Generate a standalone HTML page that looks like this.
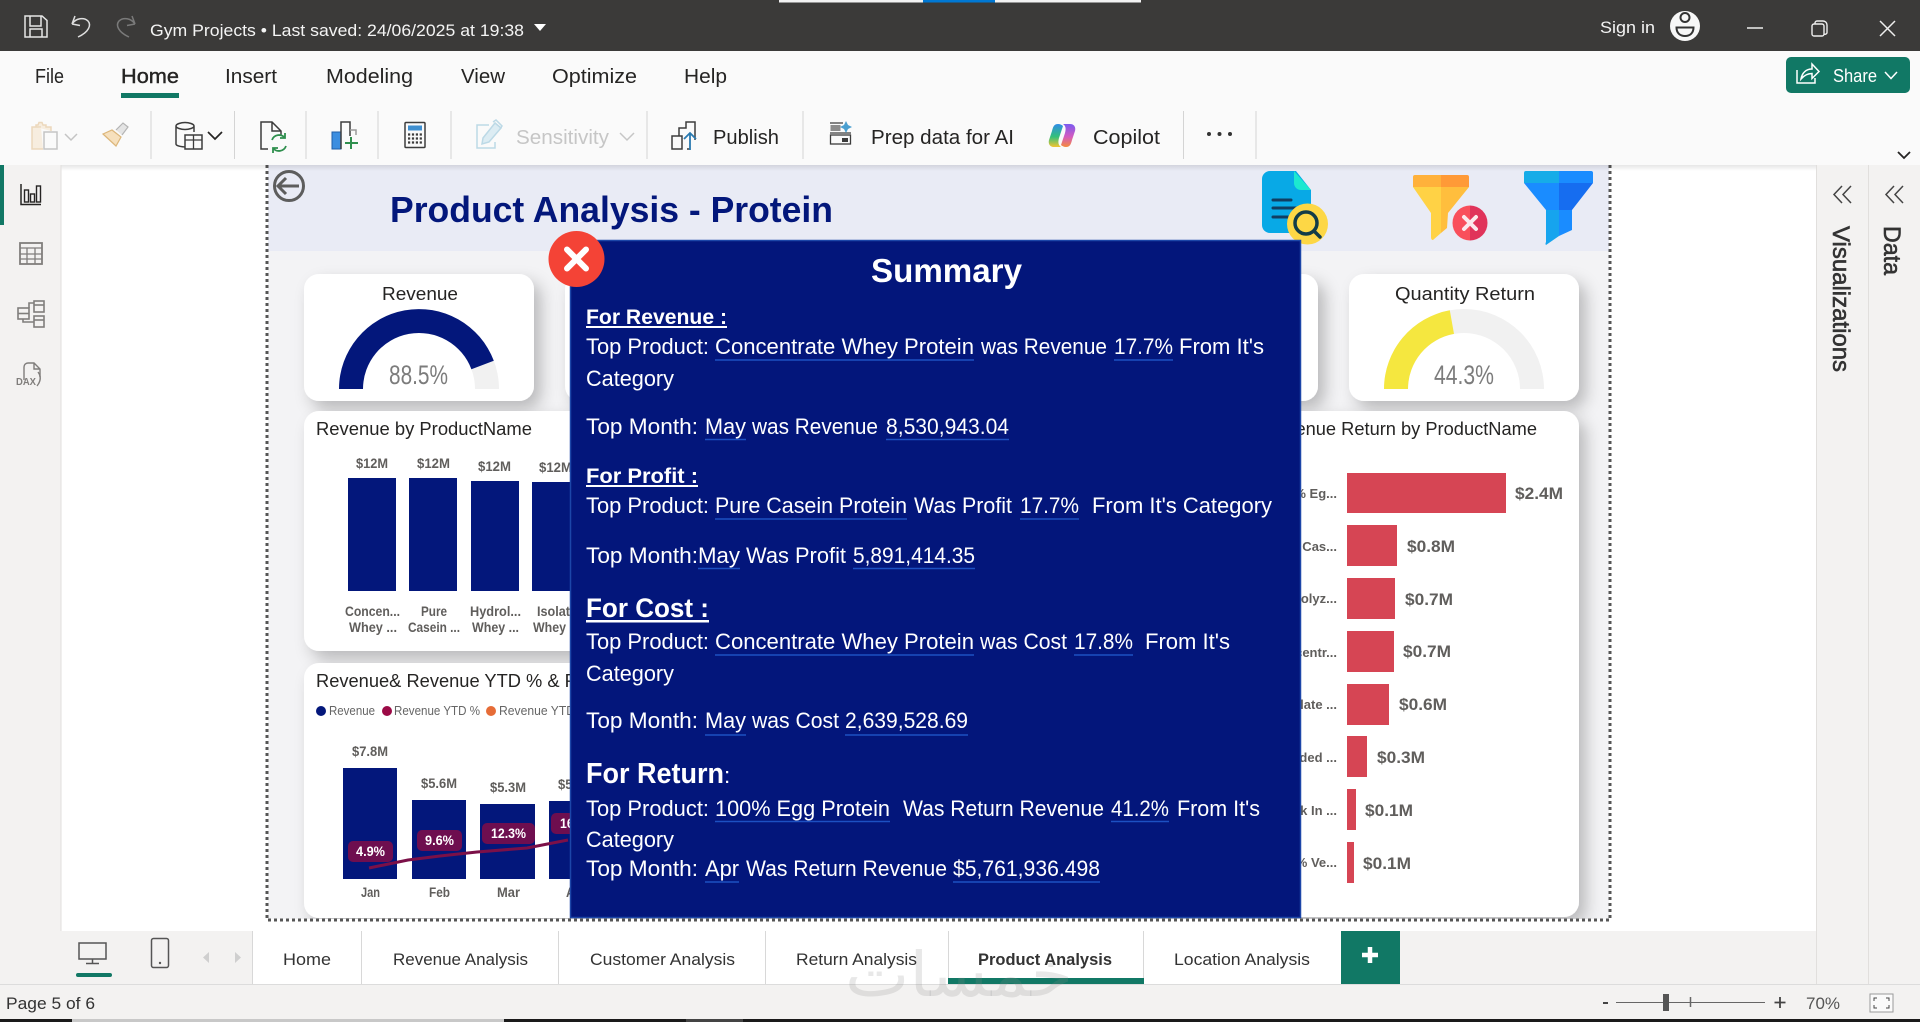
<!DOCTYPE html>
<html lang="en">
<head>
<meta charset="utf-8">
<title>Gym Projects - Product Analysis</title>
<style>
html,body{margin:0;padding:0;background:#fff;width:1920px;height:1022px;overflow:hidden}
svg{display:block}
text{font-family:"Liberation Sans",sans-serif;white-space:pre}
.tb{fill:#f4f4f4;font-size:17px}
.rb{fill:#252423;font-size:20px}
.tl{fill:#252423;font-size:20px}
.ct{fill:#252423;font-size:18px}
.dl{fill:#605e5c;font-size:14px;font-weight:700}
.rl{fill:#605e5c;font-size:17px;font-weight:700}
.m{fill:#fff;font-size:22.500px}
.mb{fill:#fff;font-weight:700}
.tab{fill:#333;font-size:17px}
.gv{fill:#7c7c7c;font-size:27px}
.lg{fill:#666;font-size:13px}
.wl{fill:#fff;font-size:14px;font-weight:700}
</style>
</head>
<body>
<svg width="1920" height="1022" viewBox="0 0 1920 1022" xmlns="http://www.w3.org/2000/svg">
<defs>
<filter id="sh" x="-20%" y="-20%" width="140%" height="140%"><feDropShadow dx="7" dy="8" stdDeviation="8" flood-color="#000" flood-opacity=".24"/></filter>
<clipPath id="pg"><rect x="268" y="165" width="1341" height="754"/></clipPath>
<linearGradient id="cpA" x1="0" y1="0" x2="0" y2="1"><stop offset="0" stop-color="#2f8ce8"/><stop offset=".55" stop-color="#34c07a"/><stop offset="1" stop-color="#f4c430"/></linearGradient>
<linearGradient id="cpB" x1="0" y1="0" x2="0" y2="1"><stop offset="0" stop-color="#7a5af0"/><stop offset=".55" stop-color="#d45bc0"/><stop offset="1" stop-color="#f58a3c"/></linearGradient>
<linearGradient id="rs" x1="0" y1="0" x2="0" y2="1"><stop offset="0" stop-color="#000" stop-opacity=".1"/><stop offset="1" stop-color="#000" stop-opacity="0"/></linearGradient>
</defs>

<!-- base -->
<rect width="1920" height="1022" fill="#f3f2f1"/>
<rect x="61" y="165" width="1755" height="766" fill="#fff"/>

<!-- report page -->
<g clip-path="url(#pg)">
<rect x="268" y="165" width="1341" height="754" fill="#f3f3f5"/>
<rect x="268" y="165" width="1341" height="86" fill="#e9ebf5"/>
<rect x="304" y="274" width="230" height="127" rx="15" fill="#fff" filter="url(#sh)"/>
<rect x="565" y="274" width="230" height="127" rx="15" fill="#fff" filter="url(#sh)"/>
<rect x="1088" y="274" width="230" height="127" rx="15" fill="#fff" filter="url(#sh)"/>
<rect x="1349" y="274" width="230" height="127" rx="15" fill="#fff" filter="url(#sh)"/>
<rect x="304" y="411" width="500" height="240" rx="15" fill="#fff" filter="url(#sh)"/>
<rect x="304" y="663" width="500" height="255" rx="15" fill="#fff" filter="url(#sh)"/>
<rect x="1080" y="411" width="499" height="506" rx="15" fill="#fff" filter="url(#sh)"/>
</g>

<!-- back arrow -->
<circle cx="289" cy="186" r="14.500" fill="none" stroke="#5d5d5d" stroke-width="3"/>
<path d="M299 186H279M286 178l-8 8 8 8" fill="none" stroke="#5d5d5d" stroke-width="3"/>

<!-- title -->
<text x="390" y="222" textLength="443" lengthAdjust="spacingAndGlyphs" style="font-size:36px;font-weight:700;fill:#03177b">Product Analysis - Protein</text>

<!-- doc icon -->
<path d="M1270 171h26l15 19v36a7 7 0 0 1-7 7h-34a8 8 0 0 1-8-8v-46a8 8 0 0 1 8-8z" fill="#08a9e6"/>
<path d="M1294 171l17 19h-10a7 7 0 0 1-7-7z" fill="#1ce8d0"/>
<path d="M1273 200h18M1273 208h26M1273 217h20" stroke="#103e62" stroke-width="3" stroke-linecap="round"/>
<circle cx="1307.500" cy="224" r="20.500" fill="#fdd745"/>
<circle cx="1306" cy="223" r="11" fill="none" stroke="#123c48" stroke-width="3.500"/>
<path d="M1314 231l6 6" stroke="#123c48" stroke-width="3.500" stroke-linecap="round"/>

<!-- orange funnel -->
<path d="M1413 177a2 2 0 0 1 2-2h26v12h-28z" fill="#ffb13b"/>
<path d="M1441 175h26a2 2 0 0 1 2 2v10h-28z" fill="#ff9a37"/>
<path d="M1413 187h28v46l-8 7q-2 0-2-3v-24z" fill="#ffd245"/>
<path d="M1441 187h28l-21 26-1 15-6 5z" fill="#ffbe3d"/>
<path d="M1470 205.500a17.500 17.500 0 0 0 0 35z" fill="#f94f5b"/>
<path d="M1470 205.500a17.500 17.500 0 0 1 0 35z" fill="#e0335a"/>
<path d="M1464 217l12 12M1476 217l-12 12" stroke="#fbe9ec" stroke-width="4" stroke-linecap="round"/>

<!-- blue funnel -->
<path d="M1524 173a2 2 0 0 1 2-2h33v12h-35z" fill="#16ace8"/>
<path d="M1559 171h32a2 2 0 0 1 2 2v10h-34z" fill="#1a8cff"/>
<path d="M1524 183h35v27h-13z" fill="#1a8cff"/>
<path d="M1559 183h34l-21 27h-13z" fill="#166df0"/>
<path d="M1546 210h13v26l-13 9q-1-1 0-3z" fill="#16a4ee"/>
<path d="M1559 210h13v20l-13 6z" fill="#1a8cff"/>

<!-- Revenue card -->
<text class="ct" x="382" y="300" textLength="76" lengthAdjust="spacingAndGlyphs">Revenue</text>
<path d="M339 389A80 80 0 0 1 499 389L475 389A56 56 0 0 0 363 389Z" fill="#f1f1f1"/>
<path d="M339 389A80 80 0 0 1 493.800 360.700L471.400 369.200A56 56 0 0 0 363 389Z" fill="#03177b"/>
<text class="gv" x="389" y="384" textLength="59" lengthAdjust="spacingAndGlyphs">88.5%</text>

<!-- Quantity Return -->
<text class="ct" x="1395" y="300" textLength="140" lengthAdjust="spacingAndGlyphs">Quantity Return</text>
<path d="M1384 389A80 80 0 0 1 1544 389L1520 389A56 56 0 0 0 1408 389Z" fill="#f1f1f1"/>
<path d="M1384 389A80 80 0 0 1 1449.800 310.300L1454 333.900A56 56 0 0 0 1408 389Z" fill="#f5e73f"/>
<text class="gv" x="1434" y="384" textLength="60" lengthAdjust="spacingAndGlyphs">44.3%</text>

<!-- Revenue by ProductName -->
<text class="ct" x="316" y="435" textLength="216" lengthAdjust="spacingAndGlyphs">Revenue by ProductName</text>
<g fill="#03177b">
<rect x="348" y="478" width="48" height="113"/>
<rect x="409" y="478" width="48" height="113"/>
<rect x="471" y="481" width="48" height="110"/>
<rect x="532" y="482" width="48" height="109"/>
</g>
<text class="dl" x="356" y="468" textLength="32" lengthAdjust="spacingAndGlyphs">$12M</text>
<text class="dl" x="417" y="468" textLength="33" lengthAdjust="spacingAndGlyphs">$12M</text>
<text class="dl" x="478" y="471" textLength="33" lengthAdjust="spacingAndGlyphs">$12M</text>
<text class="dl" x="539" y="472" textLength="33" lengthAdjust="spacingAndGlyphs">$12M</text>
<text class="dl" x="345" y="616" textLength="55" lengthAdjust="spacingAndGlyphs">Concen...</text>
<text class="dl" x="349" y="632" textLength="48" lengthAdjust="spacingAndGlyphs">Whey ...</text>
<text class="dl" x="421" y="616" textLength="26" lengthAdjust="spacingAndGlyphs">Pure</text>
<text class="dl" x="408" y="632" textLength="52" lengthAdjust="spacingAndGlyphs">Casein ...</text>
<text class="dl" x="470" y="616" textLength="51" lengthAdjust="spacingAndGlyphs">Hydrol...</text>
<text class="dl" x="472" y="632" textLength="47" lengthAdjust="spacingAndGlyphs">Whey ...</text>
<text class="dl" x="537" y="616" textLength="33" lengthAdjust="spacingAndGlyphs">Isolat</text>
<text class="dl" x="533" y="632" textLength="33" lengthAdjust="spacingAndGlyphs">Whey</text>

<!-- Revenue & YTD -->
<text class="ct" x="316" y="687" textLength="272" lengthAdjust="spacingAndGlyphs">Revenue&amp; Revenue YTD % &amp; Re</text>
<circle cx="321" cy="711" r="5" fill="#03177b"/>
<text class="lg" x="329" y="715" textLength="46" lengthAdjust="spacingAndGlyphs">Revenue</text>
<circle cx="387" cy="711" r="5" fill="#9b0a46"/>
<text class="lg" x="394" y="715" textLength="86" lengthAdjust="spacingAndGlyphs">Revenue YTD %</text>
<circle cx="491" cy="711" r="5" fill="#e66c37"/>
<text class="lg" x="499" y="715" textLength="76" lengthAdjust="spacingAndGlyphs">Revenue YTD</text>
<g fill="#03177b">
<rect x="343" y="768" width="54" height="111"/>
<rect x="412" y="800" width="54" height="79"/>
<rect x="480" y="804" width="55" height="75"/>
<rect x="549" y="801" width="54" height="78"/>
</g>
<text class="dl" x="352" y="756" textLength="36" lengthAdjust="spacingAndGlyphs">$7.8M</text>
<text class="dl" x="421" y="788" textLength="36" lengthAdjust="spacingAndGlyphs">$5.6M</text>
<text class="dl" x="490" y="792" textLength="36" lengthAdjust="spacingAndGlyphs">$5.3M</text>
<text class="dl" x="558" y="789" textLength="36" lengthAdjust="spacingAndGlyphs">$5.1M</text>
<text class="dl" x="361" y="897" textLength="19" lengthAdjust="spacingAndGlyphs">Jan</text>
<text class="dl" x="429" y="897" textLength="21" lengthAdjust="spacingAndGlyphs">Feb</text>
<text class="dl" x="497" y="897" textLength="23" lengthAdjust="spacingAndGlyphs">Mar</text>
<text class="dl" x="566" y="897" textLength="21" lengthAdjust="spacingAndGlyphs">Apr</text>
<path d="M369 868L408 860L440 856L477 852L527 848L568 840" fill="none" stroke="#7b1048" stroke-width="3"/>
<g fill="#6e0e4f">
<rect x="348" y="841" width="45" height="21" rx="5"/>
<rect x="417" y="830" width="45" height="21" rx="5"/>
<rect x="482" y="823" width="53" height="21" rx="5"/>
<rect x="551" y="813" width="53" height="21" rx="5"/>
</g>
<text class="wl" x="356" y="856" textLength="29" lengthAdjust="spacingAndGlyphs">4.9%</text>
<text class="wl" x="425" y="845" textLength="29" lengthAdjust="spacingAndGlyphs">9.6%</text>
<text class="wl" x="491" y="838" textLength="35" lengthAdjust="spacingAndGlyphs">12.3%</text>
<text class="wl" x="560" y="828" textLength="35" lengthAdjust="spacingAndGlyphs">16.0%</text>

<!-- Revenue Return by ProductName -->
<text class="ct" x="1263" y="435" textLength="274" lengthAdjust="spacingAndGlyphs">Revenue Return by ProductName</text>
<g fill="#d64554">
<rect x="1347" y="473" width="159" height="40"/>
<rect x="1347" y="525" width="50" height="41"/>
<rect x="1347" y="578" width="48" height="41"/>
<rect x="1347" y="631" width="47" height="41"/>
<rect x="1347" y="684" width="42" height="41"/>
<rect x="1347" y="736" width="20" height="41"/>
<rect x="1347" y="789" width="9" height="41"/>
<rect x="1347" y="842" width="7" height="41"/>
</g>
<text class="rl" x="1515" y="499" textLength="48" lengthAdjust="spacingAndGlyphs">$2.4M</text>
<text class="rl" x="1407" y="552" textLength="48" lengthAdjust="spacingAndGlyphs">$0.8M</text>
<text class="rl" x="1405" y="605" textLength="48" lengthAdjust="spacingAndGlyphs">$0.7M</text>
<text class="rl" x="1403" y="657" textLength="48" lengthAdjust="spacingAndGlyphs">$0.7M</text>
<text class="rl" x="1399" y="710" textLength="48" lengthAdjust="spacingAndGlyphs">$0.6M</text>
<text class="rl" x="1377" y="763" textLength="48" lengthAdjust="spacingAndGlyphs">$0.3M</text>
<text class="rl" x="1365" y="816" textLength="48" lengthAdjust="spacingAndGlyphs">$0.1M</text>
<text class="rl" x="1363" y="869" textLength="48" lengthAdjust="spacingAndGlyphs">$0.1M</text>
<g text-anchor="end">
<text class="dl" x="1337" y="498" style="font-size:13px">100% Eg...</text>
<text class="dl" x="1337" y="551" style="font-size:13px">Pure Cas...</text>
<text class="dl" x="1337" y="603" style="font-size:13px">Hydrolyz...</text>
<text class="dl" x="1337" y="657" style="font-size:13px">Concentr...</text>
<text class="dl" x="1337" y="709" style="font-size:13px">Isolate ...</text>
<text class="dl" x="1337" y="762" style="font-size:13px">Blended ...</text>
<text class="dl" x="1337" y="815" style="font-size:13px">Milk In ...</text>
<text class="dl" x="1337" y="867" style="font-size:13px">100% Ve...</text>
</g>

<!-- dotted page border -->
<path d="M267 165V920H1610V165" fill="none" stroke="#555" stroke-width="3" stroke-dasharray="3 3"/>

<!-- modal -->
<rect x="570.500" y="240.500" width="730" height="677" fill="#03167b" stroke="#1c46a8" stroke-width="1.500"/>
<circle cx="576.500" cy="259" r="28" fill="#f44336"/>
<path d="M567 249.500l19 19M586 249.500l-19 19" stroke="#fff" stroke-width="6" stroke-linecap="round"/>
<text class="mb" x="871" y="282" textLength="151" lengthAdjust="spacingAndGlyphs" style="font-size:33px">Summary</text>

<text class="mb" x="586" y="324" textLength="141" lengthAdjust="spacingAndGlyphs" style="font-size:21px">For Revenue :</text>
<rect x="586" y="326" width="141" height="2" fill="#fff"/>
<text class="m" x="586" y="354" textLength="123" lengthAdjust="spacingAndGlyphs">Top Product:</text>
<text class="m" x="715" y="354" textLength="259" lengthAdjust="spacingAndGlyphs">Concentrate Whey Protein</text>
<text class="m" x="981" y="354" textLength="126" lengthAdjust="spacingAndGlyphs">was Revenue</text>
<text class="m" x="1114" y="354" textLength="59" lengthAdjust="spacingAndGlyphs">17.7%</text>
<text class="m" x="1179" y="354" textLength="85" lengthAdjust="spacingAndGlyphs">From It's</text>
<text class="m" x="586" y="386" textLength="88" lengthAdjust="spacingAndGlyphs">Category</text>
<text class="m" x="586" y="434" textLength="112" lengthAdjust="spacingAndGlyphs">Top Month:</text>
<text class="m" x="705" y="434" textLength="41" lengthAdjust="spacingAndGlyphs">May</text>
<text class="m" x="752" y="434" textLength="126" lengthAdjust="spacingAndGlyphs">was Revenue</text>
<text class="m" x="886" y="434" textLength="123" lengthAdjust="spacingAndGlyphs">8,530,943.04</text>

<text class="mb" x="586" y="483" textLength="112" lengthAdjust="spacingAndGlyphs" style="font-size:21px">For Profit :</text>
<rect x="586" y="485" width="112" height="2" fill="#fff"/>
<text class="m" x="586" y="513" textLength="123" lengthAdjust="spacingAndGlyphs">Top Product:</text>
<text class="m" x="715" y="513" textLength="192" lengthAdjust="spacingAndGlyphs">Pure Casein Protein</text>
<text class="m" x="914" y="513" textLength="98" lengthAdjust="spacingAndGlyphs">Was Profit</text>
<text class="m" x="1020" y="513" textLength="59" lengthAdjust="spacingAndGlyphs">17.7%</text>
<text class="m" x="1092" y="513" textLength="180" lengthAdjust="spacingAndGlyphs">From It's Category</text>
<text class="m" x="586" y="563" textLength="112" lengthAdjust="spacingAndGlyphs">Top Month:</text>
<text class="m" x="698" y="563" textLength="42" lengthAdjust="spacingAndGlyphs">May</text>
<text class="m" x="746" y="563" textLength="100" lengthAdjust="spacingAndGlyphs">Was Profit</text>
<text class="m" x="853" y="563" textLength="122" lengthAdjust="spacingAndGlyphs">5,891,414.35</text>

<text class="mb" x="586" y="617" textLength="123" lengthAdjust="spacingAndGlyphs" style="font-size:27px">For Cost :</text>
<rect x="586" y="620" width="123" height="2.500" fill="#fff"/>
<text class="m" x="586" y="649" textLength="123" lengthAdjust="spacingAndGlyphs">Top Product:</text>
<text class="m" x="715" y="649" textLength="259" lengthAdjust="spacingAndGlyphs">Concentrate Whey Protein</text>
<text class="m" x="980" y="649" textLength="87" lengthAdjust="spacingAndGlyphs">was Cost</text>
<text class="m" x="1074" y="649" textLength="59" lengthAdjust="spacingAndGlyphs">17.8%</text>
<text class="m" x="1145" y="649" textLength="85" lengthAdjust="spacingAndGlyphs">From It's</text>
<text class="m" x="586" y="681" textLength="88" lengthAdjust="spacingAndGlyphs">Category</text>
<text class="m" x="586" y="728" textLength="112" lengthAdjust="spacingAndGlyphs">Top Month:</text>
<text class="m" x="705" y="728" textLength="41" lengthAdjust="spacingAndGlyphs">May</text>
<text class="m" x="752" y="728" textLength="87" lengthAdjust="spacingAndGlyphs">was Cost</text>
<text class="m" x="845" y="728" textLength="123" lengthAdjust="spacingAndGlyphs">2,639,528.69</text>

<text class="mb" x="586" y="783" textLength="138" lengthAdjust="spacingAndGlyphs" style="font-size:29px">For Return</text>
<text class="m" x="724" y="783">:</text>
<text class="m" x="586" y="816" textLength="123" lengthAdjust="spacingAndGlyphs">Top Product:</text>
<text class="m" x="715" y="816" textLength="175" lengthAdjust="spacingAndGlyphs">100% Egg Protein</text>
<text class="m" x="903" y="816" textLength="201" lengthAdjust="spacingAndGlyphs">Was Return Revenue</text>
<text class="m" x="1111" y="816" textLength="58" lengthAdjust="spacingAndGlyphs">41.2%</text>
<text class="m" x="1177" y="816" textLength="83" lengthAdjust="spacingAndGlyphs">From It's</text>
<text class="m" x="586" y="847" textLength="88" lengthAdjust="spacingAndGlyphs">Category</text>
<text class="m" x="586" y="876" textLength="112" lengthAdjust="spacingAndGlyphs">Top Month:</text>
<text class="m" x="705" y="876" textLength="34" lengthAdjust="spacingAndGlyphs">Apr</text>
<text class="m" x="746" y="876" textLength="201" lengthAdjust="spacingAndGlyphs">Was Return Revenue</text>
<text class="m" x="953" y="876" textLength="147" lengthAdjust="spacingAndGlyphs">$5,761,936.498</text>

<path d="M715 360H974M1114 360H1173M705 439.500H746M886 439.500H1009M715 519H907M1020 519H1079M698 568.500H740M853 568.500H975M715 655H974M1074 655H1133M705 735H746M845 735H968M715 821.500H890M1111 821.500H1169M705 882H739M953 882H1100" stroke="#1d50c2" stroke-width="1.500" fill="none"/>

<!-- title bar -->
<rect width="1920" height="51" fill="#3b3a39"/>
<rect x="779" y="0" width="144" height="2.500" fill="#f2f2f2"/>
<rect x="923" y="0" width="72" height="2.500" fill="#0078d4"/>
<rect x="995" y="0" width="146" height="2.500" fill="#f2f2f2"/>
<path d="M25 16h17l5 4.500V37H25zM30 16v10h11V16M30 37v-8h12v8" fill="none" stroke="#e6e6e6" stroke-width="1.500"/>
<path d="M72 24l3-8M72 24l8 1.500M72 24c4-6 12-7 16-3 3.500 4 1 11-10 16" fill="none" stroke="#dedede" stroke-width="1.500"/>
<path d="M135 24l-3-8M135 24l-8 1.500M135 24c-4-6-12-7-16-3-3.500 4-1 11 10 16" fill="none" stroke="#7a7a7a" stroke-width="1.500"/>
<text class="tb" x="150" y="36" textLength="374" lengthAdjust="spacingAndGlyphs">Gym Projects • Last saved: 24/06/2025 at 19:38</text>
<path d="M534 24h12l-6 7z" fill="#fff"/>
<text class="tb" x="1600" y="33" textLength="55" lengthAdjust="spacingAndGlyphs">Sign in</text>
<circle cx="1685" cy="26" r="15" fill="#f7f7f7"/>
<circle cx="1685" cy="17.500" r="4.500" fill="none" stroke="#333" stroke-width="2"/>
<path d="M1676.500 27.500h17c0 5.500-3.500 8.500-8.500 8.500s-8.500-3-8.500-8.500z" fill="none" stroke="#333" stroke-width="2"/>
<path d="M1747 28h16" stroke="#eee" stroke-width="1.500"/>
<path d="M1815 24h-1a2 2 0 0 0-2 2v8a2 2 0 0 0 2 2h8a2 2 0 0 0 2-2v-8a2 2 0 0 0-2-2zM1815 24v-1a2 2 0 0 1 2-2h6a4 4 0 0 1 4 4v7a2 2 0 0 1-3 2" fill="none" stroke="#eee" stroke-width="1.400"/>
<path d="M1880 21l15 15M1895 21l-15 15" stroke="#eee" stroke-width="1.500"/>

<!-- ribbon -->
<rect y="51" width="1920" height="114" fill="#fafafa"/>
<rect y="165" width="1920" height="6" fill="url(#rs)"/>
<text class="rb" x="35" y="83" textLength="29" lengthAdjust="spacingAndGlyphs">File</text>
<text class="rb" x="121" y="83" textLength="58" lengthAdjust="spacingAndGlyphs" style="stroke:#252423;stroke-width:.4">Home</text>
<text class="rb" x="225" y="83" textLength="52" lengthAdjust="spacingAndGlyphs">Insert</text>
<text class="rb" x="326" y="83" textLength="87" lengthAdjust="spacingAndGlyphs">Modeling</text>
<text class="rb" x="461" y="83" textLength="44" lengthAdjust="spacingAndGlyphs">View</text>
<text class="rb" x="552" y="83" textLength="85" lengthAdjust="spacingAndGlyphs">Optimize</text>
<text class="rb" x="684" y="83" textLength="43" lengthAdjust="spacingAndGlyphs">Help</text>
<rect x="121" y="93" width="58" height="5" fill="#117865"/>

<rect x="1786" y="57" width="124" height="36" rx="5" fill="#117865"/>
<path d="M1797 70v13h18v-5M1801 79c1-6 5-10 11-10v-5l7 7.500-7 7v-5c-5 0-8 2-11 5.500z" fill="none" stroke="#fff" stroke-width="1.500"/>
<text x="1833" y="82" textLength="44" lengthAdjust="spacingAndGlyphs" style="font-size:18px;fill:#fff">Share</text>
<path d="M1885 72l6 6.500 6-6.500" fill="none" stroke="#fff" stroke-width="1.500"/>

<path d="M151 111v48M234.500 111v48M306 111v48M378 111v48M451 111v48M647 111v48M803 111v48M1183.500 111v48M1256 111v48" stroke="#d4d4d4"/>

<!-- clipboard -->
<path d="M41 127h-9v22h11M36 127v-2h2l1-2.500h3l1 2.500h3v2h5v4" fill="#f7eddf" stroke="#ecd8bc" stroke-width="1.500"/>
<rect x="44" y="132" width="13" height="17" fill="#fafafa" stroke="#c4c4c4" stroke-width="1.500"/>
<path d="M65 134l6 6 6-6" fill="none" stroke="#c4c4c4" stroke-width="1.500"/>
<!-- brush -->
<path d="M103 134l13 12 5-9-9-7z" fill="#f6e0bd" stroke="#dcb67a" stroke-width="1.200"/>
<path d="M116 130l7-7 5 4-6 8" fill="#e4e4e4" stroke="#b4b4b4" stroke-width="1.200"/>
<!-- database -->
<path d="M187 147c-7 0-11-1.500-11-3v-18c0-2 5-3.500 9-3.500s9 1.500 9 3.500v6M176 126c0 2 5 3.500 9 3.500s9-1.500 9-3.500" fill="none" stroke="#3c3c3c" stroke-width="1.500"/>
<rect x="185" y="135" width="17" height="14" fill="#fafafa" stroke="#3c3c3c" stroke-width="1.500"/>
<path d="M185 140h17M193.500 135v14" stroke="#3c3c3c" stroke-width="1.300"/>
<path d="M208 132l7 7 7-7" fill="none" stroke="#252423" stroke-width="1.700"/>
<!-- refresh doc -->
<path d="M268 149h-7v-27h11l9 9v5M272 122v9h9" fill="none" stroke="#3c3c3c" stroke-width="1.500"/>
<path d="M272 140a7.500 7.500 0 0 1 13-2M286 146a7.500 7.500 0 0 1-13 2M285 133v5h-5M273 153v-5h5" fill="none" stroke="#2f8f4e" stroke-width="1.800"/>
<!-- chart plus -->
<rect x="332" y="132" width="9" height="17" fill="#3c8ee0" stroke="#1f5da8"/>
<path d="M341 149v-27h9v14" fill="none" stroke="#3c3c3c" stroke-width="1.500"/>
<path d="M350 130h6v5" fill="none" stroke="#9a9a9a" stroke-width="1.500"/>
<path d="M351 137v12M345 143h13" stroke="#2f8f4e" stroke-width="2"/>
<!-- calculator -->
<rect x="405" y="122.500" width="20" height="25" rx="1" fill="#fafafa" stroke="#3c3c3c" stroke-width="1.500"/>
<rect x="408" y="125.500" width="14" height="5" fill="#3f8fd0"/>
<path d="M408 134.500h14M408 138.500h14M408 142.500h14" stroke="#3c3c3c" stroke-width="2.200" stroke-dasharray="2.200 1.700"/>
<!-- sensitivity -->
<path d="M495 142v6h-18v-23h12" fill="none" stroke="#bcd9e6" stroke-width="1.500"/>
<path d="M483 138l12-15 6 5-12 14-7 2z" fill="#dcecf3" stroke="#bcd9e6" stroke-width="1.500"/>
<path d="M493 122l3-2 6 6-2 3" fill="none" stroke="#bcd9e6" stroke-width="1.500"/>
<text x="516" y="144" textLength="93" lengthAdjust="spacingAndGlyphs" style="font-size:20px;fill:#c6c6c6">Sensitivity</text>
<path d="M620 133l7 7 7-7" fill="none" stroke="#c6c6c6" stroke-width="1.500"/>
<!-- publish -->
<rect x="672" y="136" width="10" height="13" fill="none" stroke="#3c3c3c" stroke-width="1.500"/>
<path d="M679 136v-8h7v-6h9v18M690 149h-3" fill="none" stroke="#3c3c3c" stroke-width="1.500"/>
<path d="M690 150v-17M684 139l6-6 6 6" fill="none" stroke="#2a7ab0" stroke-width="1.800"/>
<text class="tl" x="713" y="144" textLength="66" lengthAdjust="spacingAndGlyphs">Publish</text>
<!-- prep -->
<rect x="830.500" y="125" width="10" height="6" fill="#8c8c8c"/>
<rect x="830.500" y="135" width="20" height="9" fill="#fafafa" stroke="#3c3c3c" stroke-width="1.300"/>
<rect x="842" y="138" width="6" height="4" fill="#3c3c3c"/>
<path d="M830 123h13M830 133h21" stroke="#3c3c3c" stroke-width="1.300"/>
<path d="M846 121l2 4 4 2-4 2-2 4-2-4-4-2 4-2z" fill="#4a9fd0"/>
<text class="tl" x="871" y="144" textLength="143" lengthAdjust="spacingAndGlyphs">Prep data for AI</text>
<!-- copilot -->
<path d="M1058 124c-4 0-5 3-6 7l-3 9c-1 4 1 7 5 7h7c-3-2-3-5-2-9l4-12c-1-1-3-2-5-2z" fill="url(#cpA)"/>
<path d="M1066 147c4 0 5-3 6-7l3-9c1-4-1-7-5-7h-7c3 2 3 5 2 9l-4 12c1 1 3 2 5 2z" fill="url(#cpB)"/>
<text class="tl" x="1093" y="144" textLength="67" lengthAdjust="spacingAndGlyphs">Copilot</text>
<circle cx="1209" cy="134" r="2" fill="#333"/><circle cx="1219.500" cy="134" r="2" fill="#333"/><circle cx="1230" cy="134" r="2" fill="#333"/>
<path d="M1898 152l6 6 6-6" fill="none" stroke="#252423" stroke-width="1.800"/>

<!-- left rail -->
<rect y="165" width="61" height="766" fill="#f3f2f1"/>
<rect x="60.500" y="165" width="1" height="766" fill="#e1dfdd"/>
<rect y="165" width="4" height="60" fill="#117865"/>
<path d="M21 184v20.500h20" fill="none" stroke="#252423" stroke-width="1.500"/>
<rect x="24.500" y="190" width="4" height="12" fill="none" stroke="#252423" stroke-width="1.400"/>
<rect x="30.500" y="194" width="4" height="8" fill="none" stroke="#252423" stroke-width="1.400"/>
<rect x="36.500" y="186" width="4" height="16" fill="none" stroke="#252423" stroke-width="1.400"/>
<rect x="20" y="243" width="22" height="21" fill="none" stroke="#807e7c" stroke-width="1.800"/>
<path d="M20 248h22M20 254h22M20 259h22M27 248v16M35 248v16" stroke="#807e7c" stroke-width="1.300"/>
<g fill="none" stroke="#807e7c" stroke-width="1.600">
<rect x="18" y="308" width="11" height="11"/><path d="M18 313.500h11"/>
<rect x="34" y="301" width="10" height="11"/><path d="M34 305h10"/>
<rect x="34" y="316" width="10" height="11"/><path d="M34 320h10"/>
<path d="M29 308v-5h5M23 319v3h11"/>
</g>
<path d="M24 380v-13a4 4 0 0 1 4-4h6l6 6v8M34 363v6h6" fill="none" stroke="#807e7c" stroke-width="1.400"/>
<path d="M38 372c3 4 3 9-1 14" fill="none" stroke="#807e7c" stroke-width="1.400"/>
<text x="16" y="385" textLength="20" lengthAdjust="spacingAndGlyphs" style="font-size:10px;font-weight:700;fill:#807e7c">DAX</text>

<!-- right panes -->
<rect x="1816" y="165" width="104" height="820" fill="#f3f2f1"/>
<path d="M1816.500 165v820M1868.500 165v820" stroke="#e1dfdd"/>
<path d="M1842 186l-8 8.500 8 8.500M1851 186l-8 8.500 8 8.500M1894 186l-8 8.500 8 8.500M1903 186l-8 8.500 8 8.500" fill="none" stroke="#444" stroke-width="1.500"/>
<text transform="translate(1833 226) rotate(90)" textLength="146" lengthAdjust="spacingAndGlyphs" style="font-size:24px;fill:#333;stroke:#333;stroke-width:.6">Visualizations</text>
<text transform="translate(1884 226) rotate(90)" textLength="49" lengthAdjust="spacingAndGlyphs" style="font-size:24px;fill:#333;stroke:#333;stroke-width:.6">Data</text>

<!-- page tabs -->
<rect x="61" y="931" width="191" height="53" fill="#f3f2f1"/>
<rect x="252" y="931" width="1089" height="53" fill="#fff"/>
<path d="M252.500 931v53M361.500 931v53M558.500 931v53M765.500 931v53M948.500 931v53M1143.500 931v53" stroke="#d8d8d8"/>
<rect x="948" y="978" width="196" height="6" fill="#117865"/>
<rect x="1341" y="931" width="59" height="53" fill="#117865"/>
<path d="M1370 947v16M1362 955h16" stroke="#fff" stroke-width="4.500"/>
<rect x="1400" y="931" width="416" height="53" fill="#f3f2f1"/>
<rect x="79" y="943" width="27" height="16" fill="none" stroke="#555" stroke-width="1.500"/>
<path d="M92.500 959v4M86 963.500h13" stroke="#555" stroke-width="1.500"/>
<rect x="76" y="973" width="36" height="4" rx="2" fill="#117865"/>
<rect x="151.500" y="938.500" width="17" height="29" rx="2" fill="none" stroke="#555" stroke-width="1.500"/>
<circle cx="160" cy="963" r="1.200" fill="#555"/>
<path d="M209 952l-6 5.500 6 5.500zM235 952l6 5.500-6 5.500z" fill="#cfcfcf"/>
<text class="tab" x="283" y="965" textLength="48" lengthAdjust="spacingAndGlyphs">Home</text>
<text class="tab" x="393" y="965" textLength="135" lengthAdjust="spacingAndGlyphs">Revenue Analysis</text>
<text class="tab" x="590" y="965" textLength="145" lengthAdjust="spacingAndGlyphs">Customer Analysis</text>
<text class="tab" x="796" y="965" textLength="121" lengthAdjust="spacingAndGlyphs">Return Analysis</text>
<text class="tab" x="978" y="965" textLength="134" lengthAdjust="spacingAndGlyphs" style="font-weight:700">Product Analysis</text>
<text class="tab" x="1174" y="965" textLength="136" lengthAdjust="spacingAndGlyphs">Location Analysis</text>

<!-- status bar -->
<rect y="984" width="1920" height="35" fill="#f3f2f1"/>
<rect y="984" width="1920" height="1" fill="#dcdcdc"/>
<text x="6" y="1009" textLength="89" lengthAdjust="spacingAndGlyphs" style="font-size:17px;fill:#333">Page 5 of 6</text>
<path d="M1603 1003h5" stroke="#444" stroke-width="2"/>
<path d="M1616 1002.500h149" stroke="#666"/>
<rect x="1663" y="994" width="6" height="17" fill="#555"/>
<path d="M1690.500 997v10" stroke="#666" stroke-width="1.500"/>
<path d="M1780 997v11M1774.500 1002.500h11" stroke="#444" stroke-width="1.800"/>
<text x="1806" y="1009" textLength="34" lengthAdjust="spacingAndGlyphs" style="font-size:17px;fill:#555">70%</text>
<rect x="1870" y="994" width="23" height="18" fill="#fafafa" stroke="#9a9a9a"/>
<path d="M1874 1001v-3h3M1889 1001v-3h-3M1874 1005v3h3M1889 1005v3h-3" fill="none" stroke="#444"/>

<!-- watermark -->
<text x="1073" y="996" textLength="228" lengthAdjust="spacingAndGlyphs" style='font-family:"DejaVu Sans",sans-serif;font-size:62px;fill:rgba(140,140,140,.2)' direction="rtl" unicode-bidi="plaintext">خمسات</text>

<!-- taskbar strip -->
<rect y="1019" width="1920" height="3" fill="#1a1a1a"/>
<rect x="72" y="1019" width="432" height="3" fill="#c8c8c8"/>
<rect x="686" y="1019" width="57" height="3" fill="#444"/>
</svg>
</body>
</html>
